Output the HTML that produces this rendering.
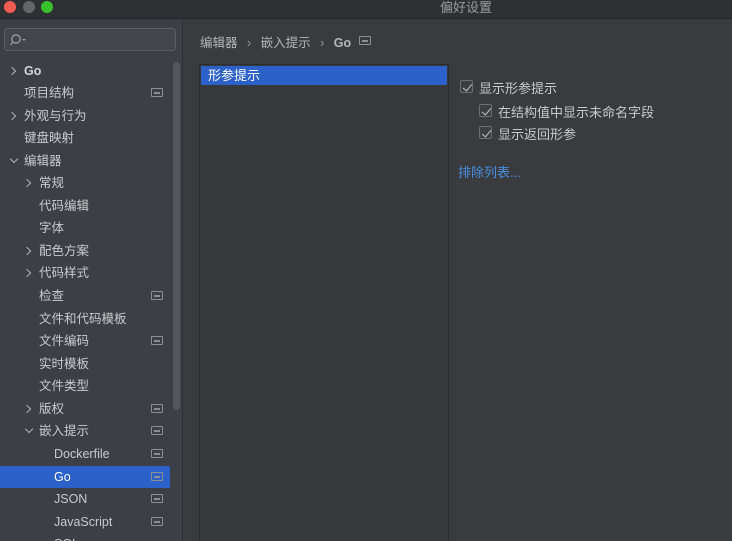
<!DOCTYPE html>
<html style="overflow:hidden;height:541px"><head><meta charset="utf-8"><style>
*{margin:0;padding:0;box-sizing:border-box}
body{width:732px;height:541px;overflow:hidden;background:#393b3e;font-family:"Liberation Sans","Noto Sans CJK SC",sans-serif;color:#c9cacc;font-size:13px;position:relative}
.tb{position:absolute;left:0;top:0;width:732px;height:19px;background:#2f3033;border-bottom:1px solid #26272a}
.tb .t{position:absolute;left:0;width:732px;text-align:center;top:0;line-height:16px;color:#9a9b9d;font-size:13px;padding-left:200px}
.dot{position:absolute;top:1px;width:12px;height:12px;border-radius:50%}
.side{position:absolute;left:0;top:20px;width:183px;height:521px;background:#3d3f46;border-right:1px solid #2c2d30}
.search{position:absolute;left:4px;top:28px;width:172px;height:23px;border:1px solid #5a5d63;border-radius:3px;background:#43464c}
.row{position:absolute;left:0;width:170px;height:22px;line-height:22px;white-space:nowrap;font-size:12.5px}
.row.sel{background:#2c61c9;color:#fff}
.arr{position:absolute;width:6px;height:6px;border-right:1.5px solid #b0b1b3;border-bottom:1.5px solid #b0b1b3}
.r{transform:rotate(-45deg)}.d{transform:rotate(45deg)}
.ic{position:absolute;left:151px;top:6px;width:12px;height:9px;border:1px solid #8c8f94;border-radius:1px}
.ic:after{content:"";position:absolute;left:2px;top:2.5px;width:6px;height:2px;background:#8c8f94}
.sb{position:absolute;left:173px;top:62px;width:7px;height:348px;background:#54575d;border-radius:4px}
.cb{position:absolute;width:13px;height:13px;border:1px solid #6b6e72;border-radius:2px;background:#3c3e41}
.cb:after{content:"";position:absolute;left:3.5px;top:0.5px;width:4px;height:8px;border-right:1.5px solid #c6c7c9;border-bottom:1.5px solid #c6c7c9;transform:rotate(40deg)}
</style></head><body>
<div class="tb"><span class="dot" style="left:4px;background:#f25a52"></span><span class="dot" style="left:23px;background:#646568"></span><span class="dot" style="left:41px;background:#3ac02d"></span><div class="t">偏好设置</div></div>
<div class="side"></div>
<div class="search"><svg width="20" height="16" style="position:absolute;left:5px;top:3px"><circle cx="6" cy="7" r="4.2" fill="none" stroke="#9a9ca0" stroke-width="1.3"/><line x1="3" y1="10" x2="0.5" y2="13" stroke="#9a9ca0" stroke-width="1.3"/><path d="M12 7h4l-2 2z" fill="#9a9ca0"/></svg></div>
<div class="sb"></div>
<div class="row" style="top:60px"><span class="arr r" style="left:9px;top:8px"></span><b style="position:absolute;left:24px;color:#d4d5d6">Go</b></div>
<div class="row" style="top:82px"><span style="position:absolute;left:24px">项目结构</span><span class="ic"></span></div>
<div class="row" style="top:105px"><span class="arr r" style="left:9px;top:8px"></span><span style="position:absolute;left:24px">外观与行为</span></div>
<div class="row" style="top:127px"><span style="position:absolute;left:24px">键盘映射</span></div>
<div class="row" style="top:150px"><span class="arr d" style="left:11px;top:6px"></span><span style="position:absolute;left:24px">编辑器</span></div>
<div class="row" style="top:172px"><span class="arr r" style="left:24px;top:8px"></span><span style="position:absolute;left:39px">常规</span></div>
<div class="row" style="top:195px"><span style="position:absolute;left:39px">代码编辑</span></div>
<div class="row" style="top:217px"><span style="position:absolute;left:39px">字体</span></div>
<div class="row" style="top:240px"><span class="arr r" style="left:24px;top:8px"></span><span style="position:absolute;left:39px">配色方案</span></div>
<div class="row" style="top:262px"><span class="arr r" style="left:24px;top:8px"></span><span style="position:absolute;left:39px">代码样式</span></div>
<div class="row" style="top:285px"><span style="position:absolute;left:39px">检查</span><span class="ic"></span></div>
<div class="row" style="top:308px"><span style="position:absolute;left:39px">文件和代码模板</span></div>
<div class="row" style="top:330px"><span style="position:absolute;left:39px">文件编码</span><span class="ic"></span></div>
<div class="row" style="top:353px"><span style="position:absolute;left:39px">实时模板</span></div>
<div class="row" style="top:375px"><span style="position:absolute;left:39px">文件类型</span></div>
<div class="row" style="top:398px"><span class="arr r" style="left:24px;top:8px"></span><span style="position:absolute;left:39px">版权</span><span class="ic"></span></div>
<div class="row" style="top:420px"><span class="arr d" style="left:26px;top:6px"></span><span style="position:absolute;left:39px">嵌入提示</span><span class="ic"></span></div>
<div class="row" style="top:443px"><span style="position:absolute;left:54px">Dockerfile</span><span class="ic"></span></div>
<div class="row sel" style="top:466px"><span style="position:absolute;left:54px">Go</span><span class="ic"></span></div>
<div class="row" style="top:488px"><span style="position:absolute;left:54px">JSON</span><span class="ic"></span></div>
<div class="row" style="top:511px"><span style="position:absolute;left:54px">JavaScript</span><span class="ic"></span></div>
<div class="row" style="top:533px;height:8px;overflow:hidden"><span style="position:absolute;left:54px;top:0">SQL</span></div>
<div style="position:absolute;left:200px;top:32px;color:#b5b6b8;font-size:12.5px;white-space:nowrap">编辑器 <span style="margin:0 6px;color:#999">›</span> 嵌入提示 <span style="margin:0 6px;color:#999">›</span> <b>Go</b></div>
<span class="ic" style="left:359px;top:36px;position:absolute"></span>
<div style="position:absolute;left:199px;top:64px;width:250px;height:477px;background:#36383b;border:1px solid #2d2e31;border-bottom:none"></div>
<div style="position:absolute;left:201px;top:66px;width:246px;height:19px;background:#2c61c9;color:#fff;line-height:19px;padding-left:7px">形参提示</div>
<div class="cb" style="left:460px;top:80px"></div><div style="position:absolute;left:479px;top:78px">显示形参提示</div>
<div class="cb" style="left:479px;top:104px"></div><div style="position:absolute;left:498px;top:102px">在结构值中显示未命名字段</div>
<div class="cb" style="left:479px;top:126px"></div><div style="position:absolute;left:498px;top:124px">显示返回形参</div>
<div style="position:absolute;left:458px;top:162px;color:#4b8ee0">排除列表...</div>
</body></html>
